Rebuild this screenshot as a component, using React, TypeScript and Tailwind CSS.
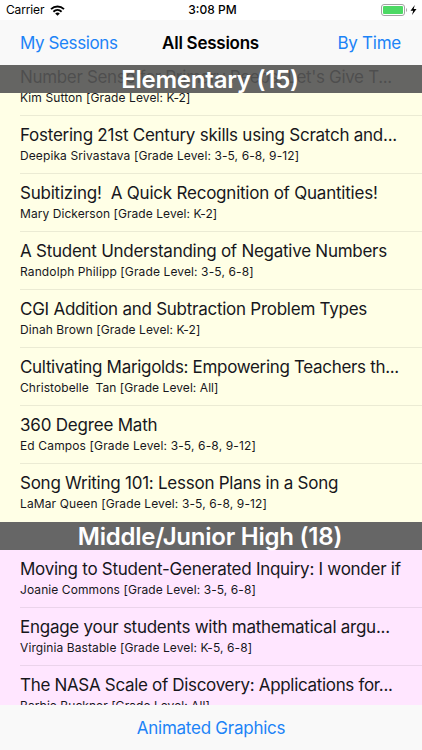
import React from 'react';
import { clsx } from 'clsx';

interface Session {
  title: string;
  detail: string;
  tracking: string;
  detailTracking: string;
}

const elementary: Session[] = [
  { title: "Number Sense for Primary Peeps: Let's Give T...", detail: 'Kim Sutton [Grade Level: K-2]', tracking: 'tracking-[-0.33px]', detailTracking: 'tracking-[0.1px]' },
  { title: 'Fostering 21st Century skills using Scratch and...', detail: 'Deepika Srivastava [Grade Level: 3-5, 6-8, 9-12]', tracking: 'tracking-[-0.25px]', detailTracking: 'tracking-[0.1px]' },
  { title: 'Subitizing!  A Quick Recognition of Quantities!', detail: 'Mary Dickerson [Grade Level: K-2]', tracking: 'tracking-[-0.22px]', detailTracking: 'tracking-[0.06px]' },
  { title: 'A Student Understanding of Negative Numbers', detail: 'Randolph Philipp [Grade Level: 3-5, 6-8]', tracking: 'tracking-[-0.26px]', detailTracking: 'tracking-[0.12px]' },
  { title: 'CGI Addition and Subtraction Problem Types', detail: 'Dinah Brown [Grade Level: K-2]', tracking: 'tracking-[-0.26px]', detailTracking: 'tracking-[0.08px]' },
  { title: 'Cultivating Marigolds: Empowering Teachers th...', detail: 'Christobelle  Tan [Grade Level: All]', tracking: 'tracking-[-0.32px]', detailTracking: 'tracking-[0.06px]' },
  { title: '360 Degree Math', detail: 'Ed Campos [Grade Level: 3-5, 6-8, 9-12]', tracking: 'tracking-[-0.2px]', detailTracking: 'tracking-[0.14px]' },
  { title: 'Song Writing 101: Lesson Plans in a Song', detail: 'LaMar Queen [Grade Level: 3-5, 6-8, 9-12]', tracking: 'tracking-[-0.25px]', detailTracking: 'tracking-[0.12px]' },
];

const middle: Session[] = [
  { title: 'Moving to Student-Generated Inquiry: I wonder if', detail: 'Joanie Commons [Grade Level: 3-5, 6-8]', tracking: 'tracking-[-0.27px]', detailTracking: 'tracking-[0.08px]' },
  { title: 'Engage your students with mathematical argu...', detail: 'Virginia Bastable [Grade Level: K-5, 6-8]', tracking: 'tracking-[-0.26px]', detailTracking: 'tracking-[0.1px]' },
  { title: 'The NASA Scale of Discovery: Applications for...', detail: 'Barbie Buckner [Grade Level: All]', tracking: 'tracking-[-0.32px]', detailTracking: 'tracking-[0.06px]' },
];

const StatusBar: React.FC = () => (
  <div className="grid h-5 shrink-0 grid-cols-3 items-center bg-white pl-1.5 pr-1 text-[12px] leading-5 text-black">
    <div className="flex items-center gap-1.5">
      <span className="tracking-[-0.15px]">Carrier</span>
      <svg className="h-[11px] w-[15px]" viewBox="0 0 15 11" fill="none" stroke="#000" strokeWidth="1.9">
        <path d="M1 4.1C4.7.6 10.3.6 14 4.1" />
        <path d="M3.4 6.7C5.8 4.5 9.2 4.5 11.6 6.7" />
        <path d="M7.5 10.8 5.2 8.4C6.5 7.3 8.5 7.3 9.8 8.4Z" fill="#000" stroke="none" />
      </svg>
    </div>
    <span className="pl-px text-center font-medium">3:08 PM</span>
    <div className="flex items-center justify-end">
      <svg className="h-3 w-[37px]" viewBox="0 0 37 12">
        <rect x=".5" y=".5" width="23" height="11" rx="2.5" fill="#fff" stroke="#a3a3a3" />
        <rect x="2" y="2" width="20" height="8" rx="1" fill="#4cd964" />
        <path d="M25 4c1.4.5 1.4 3.5 0 4Z" fill="#a3a3a3" />
        <path d="M33.8 1 29.5 6.7h2.7L31 11l4.5-5.9h-2.8Z" fill="#000" />
      </svg>
    </div>
  </div>
);

const SectionHeader: React.FC<{ title: string; className: string }> = ({ title, className }) => (
  <div className={clsx('h-7 w-full pr-0.5 text-center text-[24px] font-semibold leading-[29px] tracking-[-0.23px] text-white', className)}>
    {title}
  </div>
);

const SessionRow: React.FC<{ session: Session; last?: boolean }> = ({ session, last }) => (
  <li className="h-[58px] pl-5">
    <div className={clsx('h-full whitespace-pre border-b pt-[7px]', last ? 'border-transparent' : 'border-black/8')}>
      <p className={clsx('text-[17px] leading-6', session.tracking)}>{session.title}</p>
      <p className={clsx('pt-px text-[12px] leading-4', session.detailTracking)}>{session.detail}</p>
    </div>
  </li>
);

const App: React.FC = () => {
  return (
    <div className="flex h-[750px] w-[422px] flex-col overflow-hidden bg-[#f9f9f9] font-['Inter',sans-serif] text-[#17171c]">
      <StatusBar />

      <nav className="grid h-[45px] shrink-0 grid-cols-3 items-center bg-[#f9f9f9] pl-5 pr-[21px] pt-[3px] text-[17px] text-[#1c83f7]">
        <button className="text-left tracking-[-0.4px]">My Sessions</button>
        <h1 className="text-center font-semibold tracking-[-0.25px] text-black">All Sessions</h1>
        <button className="text-right tracking-[-0.25px]">By Time</button>
      </nav>

      <main className="relative min-h-0 flex-1 overflow-hidden">
        <SectionHeader title="Elementary (15)" className="absolute inset-x-0 top-0 z-10 bg-[#545454]/90" />
        <ul className="-mt-[7px] bg-[#ffffe6]">
          {elementary.map((session, i) => (
            <SessionRow key={session.title} session={session} last={i === elementary.length - 1} />
          ))}
        </ul>
        <SectionHeader title="Middle/Junior High (18)" className="bg-[#666]" />
        <ul className="bg-[#ffe6ff]">
          {middle.map((session) => (
            <SessionRow key={session.title} session={session} />
          ))}
        </ul>
      </main>

      <footer className="flex h-[45px] shrink-0 items-center justify-center bg-[#f9f9f9] pt-0.5 text-[17px] tracking-[-0.25px] text-[#1c83f7]">
        <button>Animated Graphics</button>
      </footer>
    </div>
  );
};

export default App;
